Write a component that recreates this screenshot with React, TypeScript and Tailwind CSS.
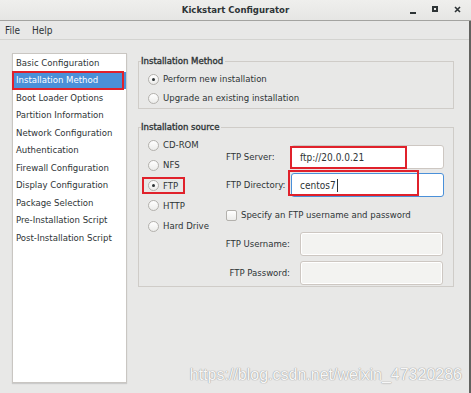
import React from "react";

const FONT = { fontFamily: '"DejaVu Sans Condensed", "DejaVu Sans", sans-serif', fontStretch: "condensed" } as React.CSSProperties;

function Radio({ checked }: { checked?: boolean }) {
  return (
    <span className="flex h-[11px] w-[11px] shrink-0 items-center justify-center rounded-full border border-[#b3b1ad] bg-gradient-to-b from-[#ffffff] to-[#ececea]">
      {checked ? <span className="h-[3px] w-[3px] rounded-full bg-[#2e3436]" /> : null}
    </span>
  );
}

function RadioRow({ label, checked, h, boxed }: { label: string; checked?: boolean; h: string; boxed?: boolean }) {
  return (
    <div className={`flex items-center ${h}`}>
      <div className="relative flex h-[11px] items-center">
        <Radio checked={checked} />
        <span className="ml-[4px] whitespace-nowrap">{label}</span>
        {boxed ? <span className="absolute left-[-6px] top-[-3px] h-[17px] w-[43px] border-2 border-[#e0212b]" /> : null}
      </div>
    </div>
  );
}

const items = [
  "Basic Configuration",
  "Installation Method",
  "Boot Loader Options",
  "Partition Information",
  "Network Configuration",
  "Authentication",
  "Firewall Configuration",
  "Display Configuration",
  "Package Selection",
  "Pre-Installation Script",
  "Post-Installation Script",
];

export default function App() {
  return (
    <div className="relative h-[393px] w-[471px] overflow-hidden bg-[#e8e8e7] text-[9.5px] text-[#2e3436]" style={FONT}>
      {/* Title bar */}
      <div className="relative flex h-[21px] items-center justify-center border-b border-[#a3a3a0] bg-gradient-to-b from-[#efefed] to-[#e6e6e4]">
        <span className="font-bold text-[9.5px] leading-none">Kickstart Configurator</span>
        <div className="absolute right-[10px] top-[4px] flex items-center gap-[16px]">
          <span className="mt-[8px] block h-[2px] w-[6px] bg-[#2e3436]" />
          <span className="block h-[6px] w-[6px] border-2 border-t-[2.5px] border-[#2e3436]" />
          <svg width="7" height="7" viewBox="0 0 7 7"><path d="M1 1L6 6M6 1L1 6" stroke="#2e3436" strokeWidth="1.6" /></svg>
        </div>
      </div>
      <div className="h-[372px] border-r-2 border-[#62625f]">
        {/* Menu bar */}
        <div className="flex h-[19px] items-center gap-[12px] border-b border-[#d3d3d0] pl-[5px] text-[10px]">
          <span>File</span>
          <span>Help</span>
        </div>
        {/* Body */}
        <div className="flex pl-[12px] pt-[13px]">
          <div className="h-[330px] w-[115px] border border-[#c9c6c2] bg-white shadow-[0_1px_1px_rgba(0,0,0,0.12)]">
            {items.map((it, i) => (
              <div
                key={it}
                className={`relative flex h-[17.5px] items-center whitespace-nowrap px-[3px] ${i === 1 ? "bg-[#4a90d9] text-white" : ""}`}
              >
                {it}
                {i === 1 ? <span className="absolute left-[-1px] right-[2px] top-[-1px] bottom-[-1px] border-2 border-[#e0212b]" /> : null}
              </div>
            ))}
          </div>
          <div className="ml-[11px] flex w-[316px] flex-col pt-[1px]">
            <fieldset className="border border-[#cfccc8] px-0">
              <legend className="ml-[2px] pr-[2px] leading-[14px] [-webkit-text-stroke:0.35px_#2e3436]">Installation Method</legend>
              <div className="flex flex-col pl-[9px] pt-[1px]">
                <RadioRow label="Perform new installation" checked h="h-[20px]" />
                <RadioRow label="Upgrade an existing installation" h="h-[19px]" />
              </div>
            </fieldset>
            <fieldset className="mt-[11px] border border-[#cfccc8] px-0">
              <legend className="ml-[2px] pr-[2px] leading-[14px] [-webkit-text-stroke:0.35px_#2e3436]">Installation source</legend>
              <div className="flex">
                <div className="flex w-[87px] flex-col pl-[9px] pt-[1px]">
                  <RadioRow label="CD-ROM" h="h-[20.25px]" />
                  <RadioRow label="NFS" h="h-[20.25px]" />
                  <RadioRow label="FTP" checked boxed h="h-[20.25px]" />
                  <RadioRow label="HTTP" h="h-[20.25px]" />
                  <RadioRow label="Hard Drive" h="h-[20.25px]" />
                </div>
                <div className="flex flex-col pb-[1px] pt-[11px]">
                  <div className="flex h-[24px] items-center">
                    <span className="w-[65px] whitespace-nowrap">FTP Server:</span>
                    <div className="relative flex h-[24px] w-[153px] items-center rounded-[3px] border border-[#cdc7c2] bg-white pl-[8px] text-[10px]">
                      ftp://20.0.0.21
                      <span className="absolute left-[-2px] top-[0px] h-[23px] w-[117px] border-2 border-[#e0212b]" />
                    </div>
                  </div>
                  <div className="mt-[4px] flex h-[24px] items-center">
                    <span className="w-[65px] whitespace-nowrap">FTP Directory:</span>
                    <div className="relative flex h-[24px] w-[153px] items-center rounded-[3px] border border-[#4a90d9] bg-white pl-[8px] text-[10px]">
                      centos7
                      <span className="ml-[1px] h-[13px] w-[1px] bg-[#2e3436]" />
                      <span className="absolute left-[-4px] top-[-4px] h-[26px] w-[131px] border-2 border-[#e0212b]" />
                    </div>
                  </div>
                  <div className="mt-[6px] flex h-[25px] items-center">
                    <span className="h-[11px] w-[11px] rounded-[2px] border border-[#b3b1ad] bg-gradient-to-b from-[#ffffff] to-[#ececea]" />
                    <span className="ml-[4px] whitespace-nowrap">Specify an FTP username and password</span>
                  </div>
                  <div className="mt-[4px] flex h-[24px] items-center">
                    <span className="flex w-[64px] justify-end whitespace-nowrap">FTP Username:</span>
                    <div className="ml-[10px] h-[24px] w-[143px] rounded-[3px] border border-[#cdc7c2] bg-[#f3f3f1] shadow-[inset_0_0_0_1px_#ffffff]" />
                  </div>
                  <div className="mt-[5px] flex h-[24px] items-center">
                    <span className="flex w-[64px] justify-end whitespace-nowrap">FTP Password:</span>
                    <div className="ml-[10px] h-[24px] w-[143px] rounded-[3px] border border-[#cdc7c2] bg-[#f3f3f1] shadow-[inset_0_0_0_1px_#ffffff]" />
                  </div>
                </div>
              </div>
            </fieldset>
          </div>
        </div>
      </div>
      <div
        className="absolute bottom-[10px] right-[9px] whitespace-nowrap text-[16px] leading-none text-[#f7f7f7]"
        style={{
          fontFamily: '"Liberation Sans", Arial, sans-serif',
          textShadow: "0 0 1px #9a9a9a, 0 0 1px #9a9a9a",
        }}
      >
        https://blog.csdn.net/weixin_47320286
      </div>
    </div>
  );
}
